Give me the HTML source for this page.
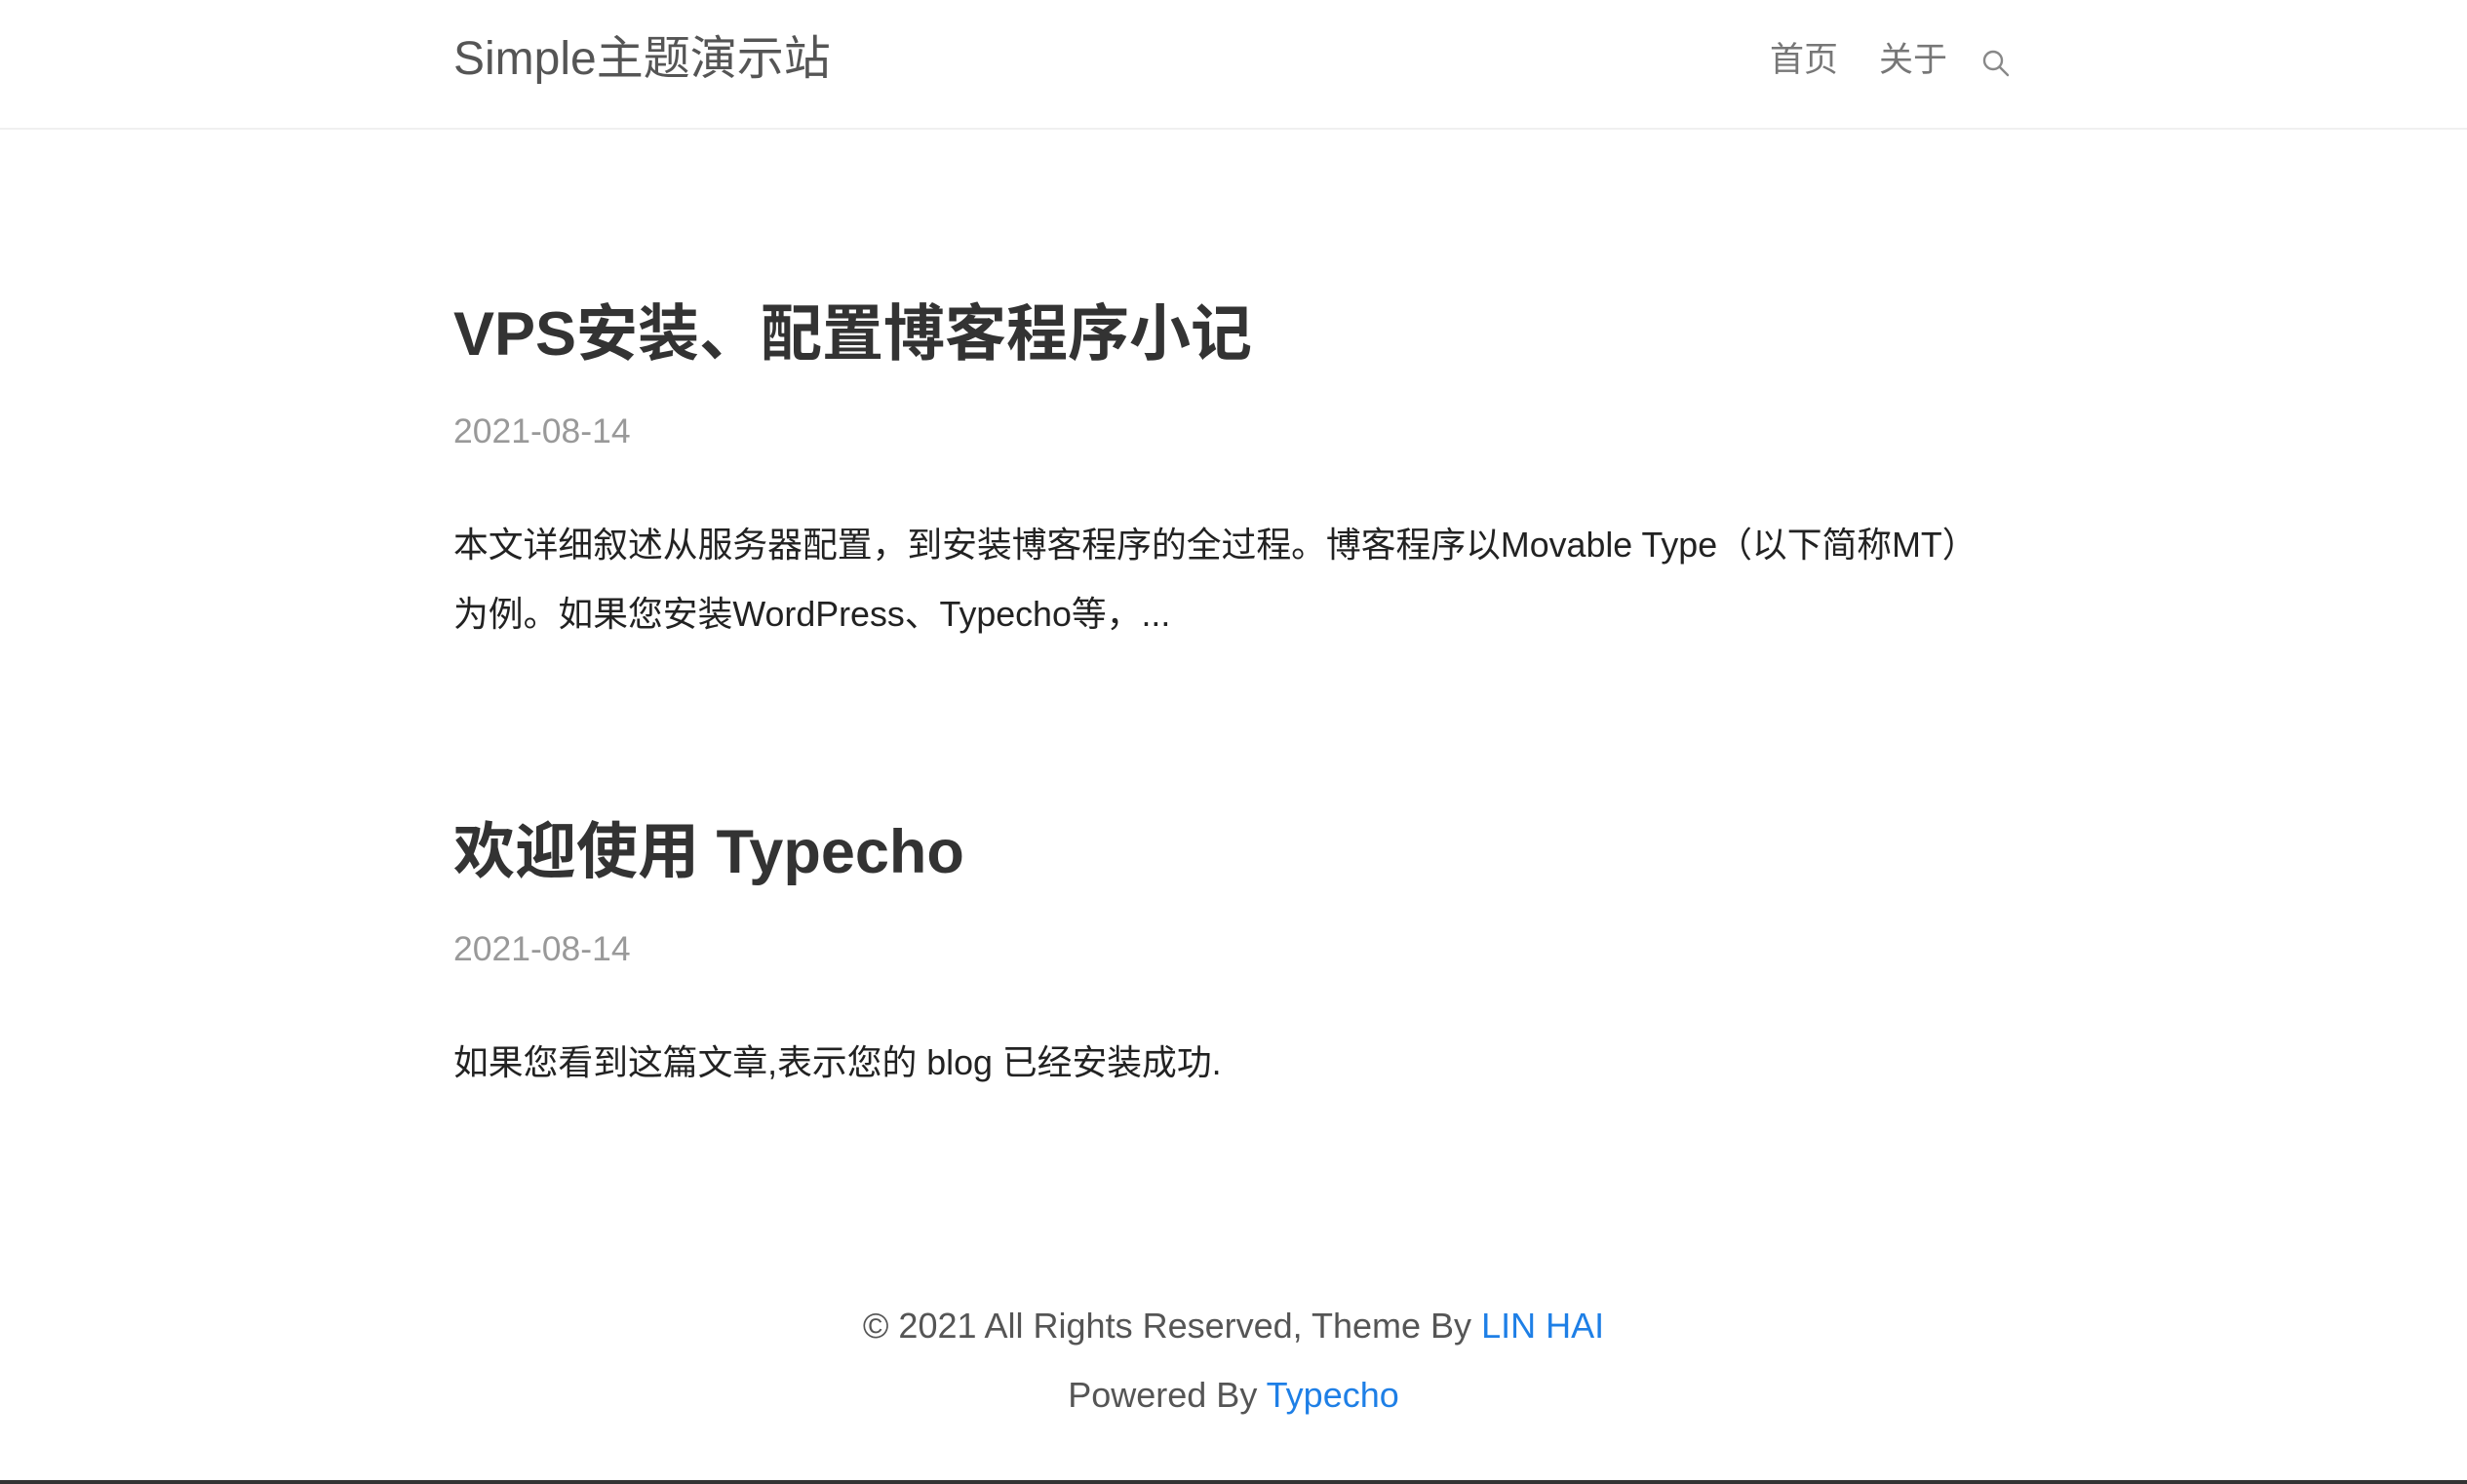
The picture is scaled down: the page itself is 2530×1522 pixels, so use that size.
<!DOCTYPE html>
<html><head><meta charset="utf-8"><style>
*{margin:0;padding:0;box-sizing:border-box}
html,body{width:2530px;height:1522px;overflow:hidden;background:#fff;font-family:"Liberation Sans","Noto Sans CJK SC",sans-serif}
.hd{position:absolute;left:0;top:0;width:2530px;height:133px;border-bottom:2px solid #f0f0f0}
.logo{position:absolute;left:465px;top:29px;font-size:48px;line-height:64px;color:#555;white-space:nowrap}
.nav{position:absolute;top:37px;font-size:35px;line-height:50px;color:#777;white-space:nowrap}
.t{position:absolute;left:465px;font-weight:bold;color:#333;font-size:63px;line-height:80px;white-space:nowrap}
.d{position:absolute;left:465px;font-size:35.5px;line-height:44px;color:#999}
.p{position:absolute;left:465px;font-size:35.8px;line-height:71px;color:#222;white-space:nowrap}
.f{position:absolute;left:0;width:2530px;text-align:center;font-size:36px;line-height:50px;color:#555}
.f a{color:#1e7fe6;text-decoration:none}
.bot{position:absolute;left:0;top:1518px;width:2530px;height:4px;background:#333}
</style></head><body>
<div class="hd">
<div class="logo">Simple主题演示站</div>
<div class="nav" style="left:1815px">首页</div>
<div class="nav" style="left:1927px">关于</div>
<svg style="position:absolute;left:2032px;top:50px" width="30" height="30" viewBox="0 0 30 30"><circle cx="12" cy="12" r="9" fill="none" stroke="#888" stroke-width="2.4"/><line x1="18.5" y1="18.5" x2="27" y2="27" stroke="#888" stroke-width="2.4" stroke-linecap="round"/></svg>
</div>
<div class="t" style="top:303px">VPS安装、配置博客程序小记</div>
<div class="d" style="top:420px">2021-08-14</div>
<div class="p" style="top:524px">本文详细叙述从服务器配置，到安装博客程序的全过程。博客程序以Movable Type（以下简称MT）<br>为例。如果您安装WordPress、Typecho等，...</div>
<div class="t" style="top:834px">欢迎使用 Typecho</div>
<div class="d" style="top:951px">2021-08-14</div>
<div class="p" style="top:1055px">如果您看到这篇文章,表示您的 blog 已经安装成功.</div>
<div class="f" style="top:1335px">© 2021 All Rights Reserved, Theme By <a>LIN HAI</a></div>
<div class="f" style="top:1406px">Powered By <a>Typecho</a></div>
<div class="bot"></div>
</body></html>
